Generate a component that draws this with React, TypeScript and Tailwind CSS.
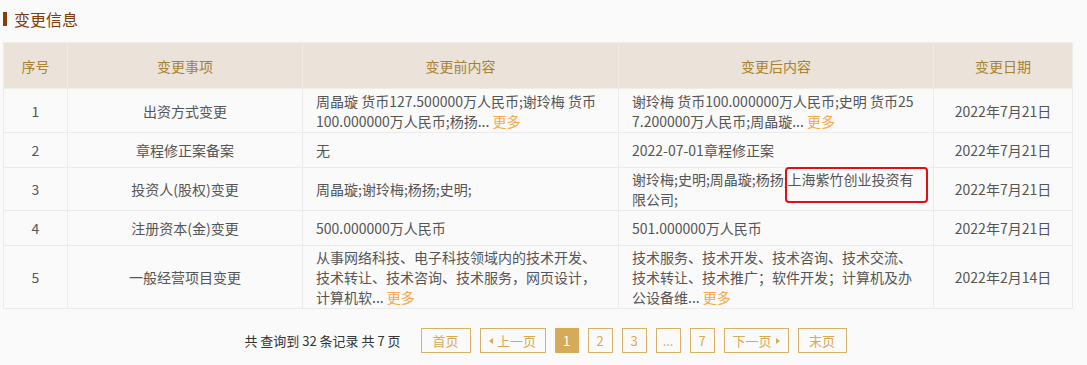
const rows = [
	{
		no: "1",
		item: "出资方式变更",
		before: ["周晶璇 货币127.500000万人民币;谢玲梅 货币", "100.000000万人民币;杨扬..."],
		beforeMore: true,
		after: ["谢玲梅 货币100.000000万人民币;史明 货币25", "7.200000万人民币;周晶璇..."],
		afterMore: true,
		date: "2022年7月21日",
		h: "h-[44px]",
	},
	{
		no: "2",
		item: "章程修正案备案",
		before: ["无"],
		after: ["2022-07-01章程修正案"],
		date: "2022年7月21日",
		h: "h-[35px]",
	},
	{
		no: "3",
		item: "投资人(股权)变更",
		before: ["周晶璇;谢玲梅;杨扬;史明;"],
		after: ["谢玲梅;史明;周晶璇;杨扬;上海紫竹创业投资有", "限公司;"],
		date: "2022年7月21日",
		mark: true,
		h: "h-[42px]",
	},
	{
		no: "4",
		item: "注册资本(金)变更",
		before: ["500.000000万人民币"],
		after: ["501.000000万人民币"],
		date: "2022年7月21日",
		h: "h-[35px]",
	},
	{
		no: "5",
		item: "一般经营项目变更",
		before: ["从事网络科技、电子科技领域内的技术开发、", "技术转让、技术咨询、技术服务，网页设计，", "计算机软..."],
		beforeMore: true,
		after: ["技术服务、技术开发、技术咨询、技术交流、", "技术转让、技术推广；软件开发；计算机及办", "公设备维..."],
		afterMore: true,
		date: "2022年2月14日",
		h: "h-[63px]",
	},
];

const Lines = ({ lines, more }: { lines: string[]; more?: boolean }) => (
	<>
		{lines.map((line, i) => (
			<div key={i} className="whitespace-nowrap">
				{line}
				{more && i === lines.length - 1 && <span className="text-[#f7a945]"> 更多</span>}
			</div>
		))}
	</>
);

const PageBtn = ({ children, w, active }: { children: React.ReactNode; w: string; active?: boolean }) => (
	<div
		className={`${w} h-[25px] flex items-center justify-center gap-[4px] border text-[13px] ${
			active ? "bg-[#d5ab5a] border-[#d5ab5a] text-white" : "border-[#d8b26a] text-[#d6a956]"
		}`}
	>
		{children}
	</div>
);

export default function App() {
	return (
		<div className="min-h-[365px] bg-[#fafafa] px-[3px] pt-[9px] font-['Noto_Sans_CJK_SC','Noto_Sans',sans-serif] text-[14px] text-[#555]">
			<div className="flex items-center h-[20px] gap-[7px]">
				<div className="w-[4px] h-[14px] bg-[#8c3d07]" />
				<div className="text-[16px] text-[#86390a] leading-[20px]">变更信息</div>
			</div>

			<table className="mt-[13px] w-[1069px] table-fixed border-collapse leading-[20px]">
				<colgroup>
					<col className="w-[64px]" />
					<col className="w-[235px]" />
					<col className="w-[316px]" />
					<col className="w-[315px]" />
					<col className="w-[139px]" />
				</colgroup>
				<thead>
					<tr className="h-[46px] bg-[#ebe3d9] text-[#a88132]">
						<th className="border border-[#f1ece6] font-normal">序号</th>
						<th className="border border-[#f1ece6] font-normal">变更事项</th>
						<th className="border border-[#f1ece6] font-normal">变更前内容</th>
						<th className="border border-[#f1ece6] font-normal">变更后内容</th>
						<th className="border border-[#f1ece6] font-normal">变更日期</th>
					</tr>
				</thead>
				<tbody>
					{rows.map((r) => (
						<tr key={r.no} className={r.h}>
							<td className="border border-[#ebebeb] text-center">{r.no}</td>
							<td className="border border-[#ebebeb] text-center">{r.item}</td>
							<td className="border border-[#ebebeb] px-[13px] py-[1px]">
								<Lines lines={r.before} more={r.beforeMore} />
							</td>
							<td className="border border-[#ebebeb] px-[13px] py-[1px] relative">
								<Lines lines={r.after} more={r.afterMore} />
								{r.mark && (
									<div className="absolute left-[166px] top-[-1px] w-[143px] h-[36px] border-2 border-[#e01010] rounded-[4px]" />
								)}
							</td>
							<td className="border border-[#ebebeb] text-center">{r.date}</td>
						</tr>
					))}
				</tbody>
			</table>

			<div className="mt-[19px] flex items-center justify-center gap-[9px] pl-[4px]">
				<div className="text-[13px] text-[#333] mr-[11px]">共 查询到 32 条记录 共 7 页</div>
				<PageBtn w="w-[50px]">首页</PageBtn>
				<PageBtn w="w-[66px]">
					<span className="w-0 h-0 border-y-[3px] border-y-transparent border-r-[4px] border-r-[#d6a956]" />
					上一页
				</PageBtn>
				<PageBtn w="w-[24px]" active>
					1
				</PageBtn>
				<PageBtn w="w-[25px]">2</PageBtn>
				<PageBtn w="w-[25px]">3</PageBtn>
				<PageBtn w="w-[25px]">...</PageBtn>
				<PageBtn w="w-[25px]">7</PageBtn>
				<PageBtn w="w-[65px]">
					下一页
					<span className="w-0 h-0 border-y-[3px] border-y-transparent border-l-[4px] border-l-[#d6a956]" />
				</PageBtn>
				<PageBtn w="w-[49px]">末页</PageBtn>
			</div>
		</div>
	);
}
